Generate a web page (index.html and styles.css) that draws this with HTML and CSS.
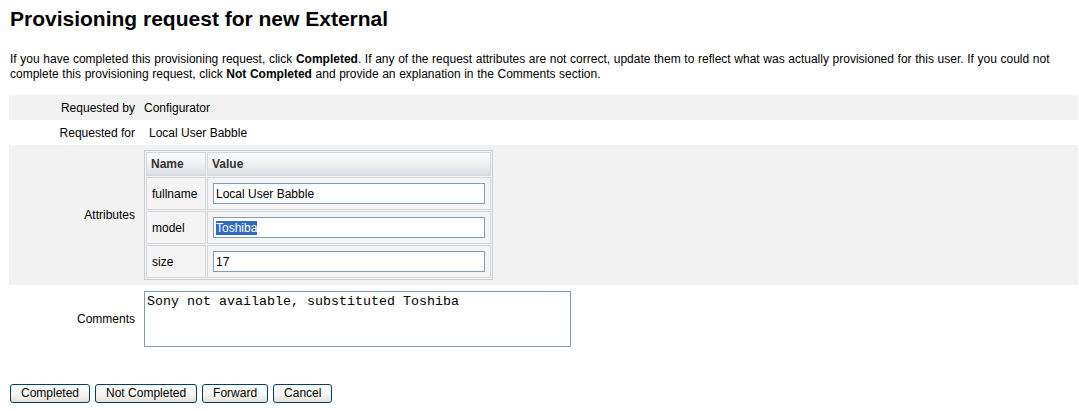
FILE: index.html
```html
<!DOCTYPE html>
<html lang="en">
<head>
<meta charset="utf-8">
<title>Provisioning request for new External</title>
<link rel="stylesheet" href="styles.css">
</head>
<body>
<div class="page">
  <h1 class="title">Provisioning request for new External</h1>
  <p class="intro">If you have completed this provisioning request, click <b>Completed</b>. If any of the request attributes are not correct, update them to reflect what was actually provisioned for this user. If you could not complete this provisioning request, click <b>Not Completed</b> and provide an explanation in the Comments section.</p>
  <table class="form">
    <tr class="row shade row-short">
      <td class="label">Requested by</td>
      <td class="value">Configurator</td>
    </tr>
    <tr class="row row-short">
      <td class="label">Requested for</td>
      <td class="value value-for">Local User Babble</td>
    </tr>
    <tr class="row shade">
      <td class="label">Attributes</td>
      <td class="value value-attrs">
        <table class="attrs">
          <tr>
            <th class="col-name">Name</th>
            <th class="col-value">Value</th>
          </tr>
          <tr>
            <td class="attr-name">fullname</td>
            <td class="attr-value"><div class="field">Local User Babble</div></td>
          </tr>
          <tr>
            <td class="attr-name">model</td>
            <td class="attr-value"><div class="field"><span class="selected">Toshiba</span></div></td>
          </tr>
          <tr>
            <td class="attr-name">size</td>
            <td class="attr-value"><div class="field">17</div></td>
          </tr>
        </table>
      </td>
    </tr>
    <tr class="row">
      <td class="label">Comments</td>
      <td class="value value-comments"><textarea class="comments">Sony not available, substituted Toshiba</textarea></td>
    </tr>
  </table>
  <div class="buttons">
    <button class="btn">Completed</button>
    <button class="btn">Not Completed</button>
    <button class="btn">Forward</button>
    <button class="btn">Cancel</button>
  </div>
</div>
</body>
</html>
```
FILE: styles.css
```css
html, body {
  margin: 0;
  padding: 0;
  background: #ffffff;
}

body {
  font-family: "Liberation Sans", Arial, sans-serif;
  font-size: 12px;
  color: #000;
}

.page {
  padding: 0 1px 0 9px;
}

.title {
  margin: 7px 0 0 1px;
  font-size: 21px;
  line-height: 24px;
  font-weight: bold;
}

.intro {
  margin: 21px 0 0 1px;
  line-height: 15px;
  font-size: 12px;
  word-spacing: 0.3px;
}

.intro b {
  font-weight: bold;
}

.form {
  margin-top: 13px;
  width: 100%;
  border-collapse: collapse;
}

.row.shade {
  background: #f2f2f2;
}

.row-short {
  height: 25px;
}

.label {
  width: 126px;
  padding: 0 5px 0 0;
  text-align: right;
  vertical-align: middle;
  white-space: nowrap;
}

.value {
  padding: 0 0 0 4px;
  vertical-align: middle;
}

.value-for {
  padding-left: 9px;
}

.value-attrs {
  padding-top: 5px;
  padding-bottom: 5px;
}

.value-comments {
  padding-top: 6px;
  padding-bottom: 6px;
}

.attrs {
  border: 1px solid #c6ced6;
  border-spacing: 1px;
  background: #f4f4f4;
}

.attrs th {
  height: 22px;
  padding: 0 4px;
  text-align: left;
  font-weight: bold;
  color: #333;
  border: 1px solid #d4d8dc;
  background: linear-gradient(#fbfbfc, #eceef0 60%, #d9dce1);
}

.col-name {
  width: 50px;
}

.col-value {
  width: 274px;
}

.attrs td {
  border: 1px solid #d0d6dc;
  height: 31px;
}

.attr-name {
  padding: 0 4px 0 5px;
}

.attr-value {
  padding: 0 5px;
}

.field {
  box-sizing: border-box;
  width: 272px;
  height: 21px;
  border: 1px solid #7f9db9;
  background: #fff;
  padding: 2px 2px 0 2px;
  line-height: 16px;
  white-space: nowrap;
}

.selected {
  background: #316ac5;
  color: #fff;
}

.comments {
  box-sizing: border-box;
  display: block;
  width: 427px;
  height: 56px;
  margin: 0;
  border: 1px solid #7f9db9;
  padding: 2px 2px;
  font-family: "Liberation Mono", "Courier New", monospace;
  font-size: 13.33px;
  line-height: 15px;
  resize: none;
  color: #000;
}

.buttons {
  display: flex;
  gap: 5px;
  margin-top: 31px;
  padding-left: 1px;
}

.btn {
  box-sizing: border-box;
  height: 19px;
  padding: 0 10px;
  border: 1px solid #003c74;
  border-radius: 3px;
  background: linear-gradient(#ffffff, #f4f3ee 60%, #e3e1d6);
  font-family: "Liberation Sans", Arial, sans-serif;
  font-size: 12px;
  line-height: 15px;
  color: #000;
}
```
